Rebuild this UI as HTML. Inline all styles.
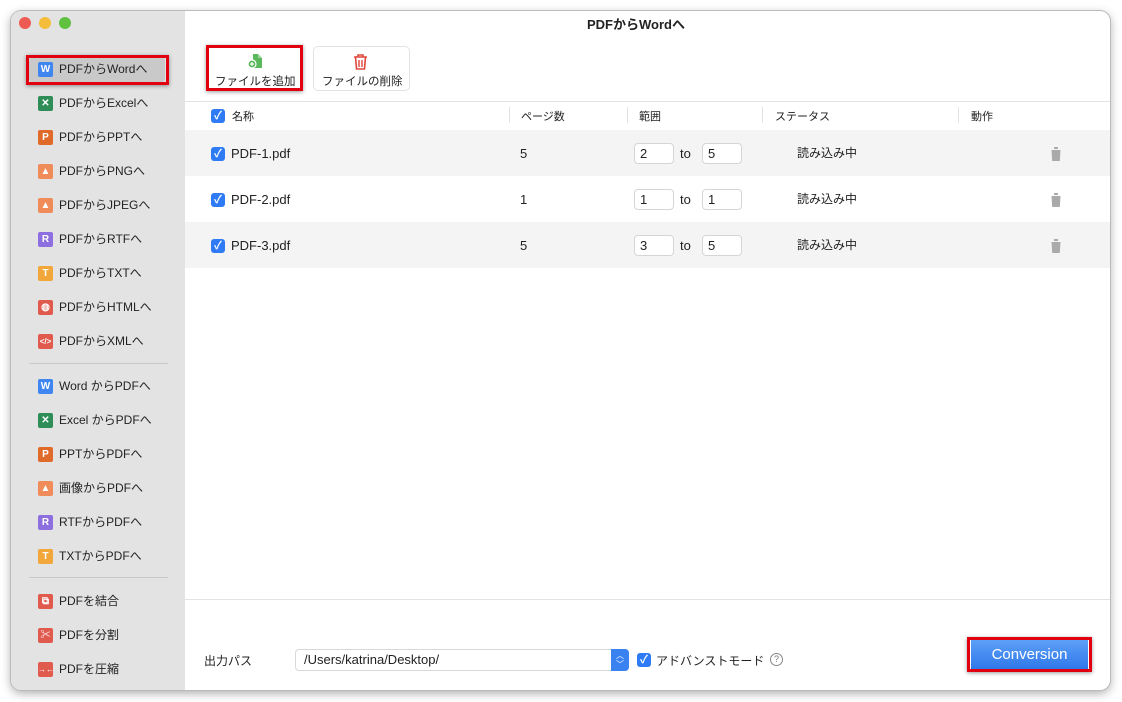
<!DOCTYPE html>
<html><head><meta charset="utf-8"><style>
*{margin:0;padding:0;box-sizing:border-box}
body{width:1122px;height:702px;background:#fff;font-family:"Liberation Sans","Noto Sans CJK JP",sans-serif;position:relative;overflow:hidden;color:#222}
.win{position:absolute;left:11px;top:11px;width:1099px;height:679px;border-radius:10px;background:#fff;box-shadow:0 0 0 1px #bbb,0 3px 10px rgba(0,0,0,.35);overflow:hidden}
.side{position:absolute;left:0;top:0;width:174px;height:679px;background:#e3e3e3}
.dot{position:absolute;top:6px;width:12px;height:12px;border-radius:50%}
.it{position:absolute;left:27px;font-size:12px;height:20px;line-height:20px;display:flex;align-items:center;color:#222}
.ic{width:15px;height:15px;border-radius:2px;margin-right:6px;color:#fff;font-size:10px;font-weight:bold;text-align:center;line-height:15px;flex:none}
.sep{position:absolute;left:18px;width:139px;height:1px;background:#c8c8c8}
.red{position:absolute;border:3px solid #e00010;box-shadow:0 1px 4px rgba(0,0,0,.4)}
.a{position:absolute;font-size:12px;white-space:nowrap}
.cb{position:absolute;width:14px;height:14px;border-radius:3px;background:#2f7bf5;color:#fff;font-size:11px;line-height:14px;text-align:center;font-weight:bold}
.inp{position:absolute;width:40px;height:21px;border:1px solid #d5d5d5;border-radius:4px;background:#fff;font-size:13px;line-height:19px;padding-left:5px}
.hs{position:absolute;top:96px;width:1px;height:16px;background:#e2e2e2}
</style></head><body>
<div class="win">
 <div class="side">
  <div class="dot" style="left:8px;background:#ee5b53"></div>
  <div class="dot" style="left:28px;background:#f4bd3a"></div>
  <div class="dot" style="left:48px;background:#5fc13f"></div>
  <div style="position:absolute;left:18px;top:46px;width:136px;height:25px;background:#c9c9c9;border-radius:3px"></div>
  <div class="it" style="top:48px"><span class="ic" style="background:#3f86f0">W</span>PDFからWordへ</div>
  <div class="it" style="top:82px"><span class="ic" style="background:#2f8d57">✕</span>PDFからExcelへ</div>
  <div class="it" style="top:116px"><span class="ic" style="background:#e06a2a">P</span>PDFからPPTへ</div>
  <div class="it" style="top:150px"><span class="ic" style="background:#f08b5a">▲</span>PDFからPNGへ</div>
  <div class="it" style="top:184px"><span class="ic" style="background:#f08b5a">▲</span>PDFからJPEGへ</div>
  <div class="it" style="top:218px"><span class="ic" style="background:#8e6fe0">R</span>PDFからRTFへ</div>
  <div class="it" style="top:252px"><span class="ic" style="background:#f2a73a">T</span>PDFからTXTへ</div>
  <div class="it" style="top:286px"><span class="ic" style="background:#e05a4e">◍</span>PDFからHTMLへ</div>
  <div class="it" style="top:320px"><span class="ic" style="background:#e05a4e;font-size:8px">&lt;/&gt;</span>PDFからXMLへ</div>
  <div class="sep" style="top:352px"></div>
  <div class="it" style="top:365px"><span class="ic" style="background:#3f86f0">W</span>Word からPDFへ</div>
  <div class="it" style="top:399px"><span class="ic" style="background:#2f8d57">✕</span>Excel からPDFへ</div>
  <div class="it" style="top:433px"><span class="ic" style="background:#e06a2a">P</span>PPTからPDFへ</div>
  <div class="it" style="top:467px"><span class="ic" style="background:#f08b5a">▲</span>画像からPDFへ</div>
  <div class="it" style="top:501px"><span class="ic" style="background:#8e6fe0">R</span>RTFからPDFへ</div>
  <div class="it" style="top:535px"><span class="ic" style="background:#f2a73a">T</span>TXTからPDFへ</div>
  <div class="sep" style="top:566px"></div>
  <div class="it" style="top:580px"><span class="ic" style="background:#e05a4e">⧉</span>PDFを結合</div>
  <div class="it" style="top:614px"><span class="ic" style="background:#e05a4e">✂</span>PDFを分割</div>
  <div class="it" style="top:648px"><span class="ic" style="background:#e05a4e;font-size:8px">→←</span>PDFを圧縮</div>
 </div>
 <div class="red" style="left:15px;top:44px;width:143px;height:30px"></div>

 <div class="a" style="left:576px;top:3px;font-weight:bold;font-size:13px">PDFからWordへ</div>
 <div style="position:absolute;left:302px;top:35px;width:97px;height:45px;border:1px solid #e3e3e3;border-radius:5px;background:#fff"></div>
 <svg style="position:absolute;left:236px;top:42px" width="16" height="16" viewBox="0 0 16 16"><path d="M6 1h5l4 4v10H6z" fill="#5bb85c"/><path d="M11 1v4h4" fill="#9ad49a"/><circle cx="5" cy="11" r="4" fill="#5bb85c" stroke="#fff" stroke-width="1.2"/><path d="M5 9v4M3 11h4" stroke="#fff" stroke-width="1.2"/></svg>
 <div class="a" style="left:204px;top:62px;font-size:11.5px">ファイルを追加</div>
 <svg style="position:absolute;left:342px;top:43px" width="15" height="16" viewBox="0 0 15 16"><path d="M1 3h13M5 3V1h5v2M2.5 3l1 12h8l1-12" fill="none" stroke="#e0483d" stroke-width="1.6"/><path d="M6 6v7M9 6v7" stroke="#e0483d" stroke-width="1.4"/></svg>
 <div class="a" style="left:311px;top:62px;font-size:11.5px">ファイルの削除</div>
 <div class="red" style="left:195px;top:34px;width:97px;height:46px"></div>

 <div style="position:absolute;left:174px;top:90px;width:925px;height:1px;background:#e3e3e3"></div>
 <div class="cb" style="left:200px;top:98px">✓</div>
 <div class="a" style="left:221px;top:97px;font-size:11px">名称</div>
 <div class="hs" style="left:498px"></div><div class="a" style="left:510px;top:97px;font-size:11px">ページ数</div>
 <div class="hs" style="left:616px"></div><div class="a" style="left:628px;top:97px;font-size:11px">範囲</div>
 <div class="hs" style="left:751px"></div><div class="a" style="left:764px;top:97px;font-size:11px">ステータス</div>
 <div class="hs" style="left:947px"></div><div class="a" style="left:960px;top:97px;font-size:11px">動作</div>

 <div style="position:absolute;left:174px;top:119px;width:925px;height:46px;background:#f4f4f4"></div>
 <div style="position:absolute;left:174px;top:211px;width:925px;height:46px;background:#f4f4f4"></div>

 <div class="cb" style="left:200px;top:136px">✓</div><div class="a" style="left:220px;top:135px;font-size:13px">PDF-1.pdf</div>
 <div class="a" style="left:509px;top:135px;font-size:13px">5</div>
 <div class="inp" style="left:623px;top:132px">2</div><div class="a" style="left:669px;top:135px;font-size:13px">to</div><div class="inp" style="left:691px;top:132px">5</div>
 <div class="a" style="left:786px;top:133px;font-size:12px">読み込み中</div>

 <div class="cb" style="left:200px;top:182px">✓</div><div class="a" style="left:220px;top:181px;font-size:13px">PDF-2.pdf</div>
 <div class="a" style="left:509px;top:181px;font-size:13px">1</div>
 <div class="inp" style="left:623px;top:178px">1</div><div class="a" style="left:669px;top:181px;font-size:13px">to</div><div class="inp" style="left:691px;top:178px">1</div>
 <div class="a" style="left:786px;top:179px;font-size:12px">読み込み中</div>

 <div class="cb" style="left:200px;top:228px">✓</div><div class="a" style="left:220px;top:227px;font-size:13px">PDF-3.pdf</div>
 <div class="a" style="left:509px;top:227px;font-size:13px">5</div>
 <div class="inp" style="left:623px;top:224px">3</div><div class="a" style="left:669px;top:227px;font-size:13px">to</div><div class="inp" style="left:691px;top:224px">5</div>
 <div class="a" style="left:786px;top:225px;font-size:12px">読み込み中</div>

 <svg style="position:absolute;left:1039px;top:136px" width="12" height="14" viewBox="0 0 12 14"><path d="M0 2h12M4 2V0h4v2M1.5 3h9l-.7 11H2.2z" fill="#aaa"/></svg>
 <svg style="position:absolute;left:1039px;top:182px" width="12" height="14" viewBox="0 0 12 14"><path d="M0 2h12M4 2V0h4v2M1.5 3h9l-.7 11H2.2z" fill="#aaa"/></svg>
 <svg style="position:absolute;left:1039px;top:228px" width="12" height="14" viewBox="0 0 12 14"><path d="M0 2h12M4 2V0h4v2M1.5 3h9l-.7 11H2.2z" fill="#aaa"/></svg>

 <div style="position:absolute;left:174px;top:588px;width:925px;height:1px;background:#e3e3e3"></div>
 <div class="a" style="left:193px;top:641px;font-size:12px">出力パス</div>
 <div style="position:absolute;left:284px;top:638px;width:334px;height:22px;border:1px solid #d8d8d8;border-radius:4px;background:#fff;font-size:13px;line-height:20px;padding-left:8px">/Users/katrina/Desktop/</div>
 <div style="position:absolute;left:600px;top:638px;width:18px;height:22px;background:#3a82f0;border-radius:0 4px 4px 0;color:#fff;font-size:8px;line-height:9px;text-align:center;padding-top:2px">︿<br>﹀</div>
 <div class="cb" style="left:626px;top:642px">✓</div>
 <div class="a" style="left:645px;top:641px;font-size:12px">アドバンストモード</div>
 <div style="position:absolute;left:759px;top:642px;width:13px;height:13px;border:1px solid #888;border-radius:50%;font-size:9px;line-height:11px;text-align:center;color:#777">?</div>
 <div style="position:absolute;left:960px;top:629px;width:117px;height:29px;background:linear-gradient(#5da0f7,#2f78ea);color:#fff;font-size:15px;text-align:center;line-height:30px">Conversion</div>
 <div class="red" style="left:956px;top:626px;width:125px;height:35px"></div>
</div>
</body></html>
